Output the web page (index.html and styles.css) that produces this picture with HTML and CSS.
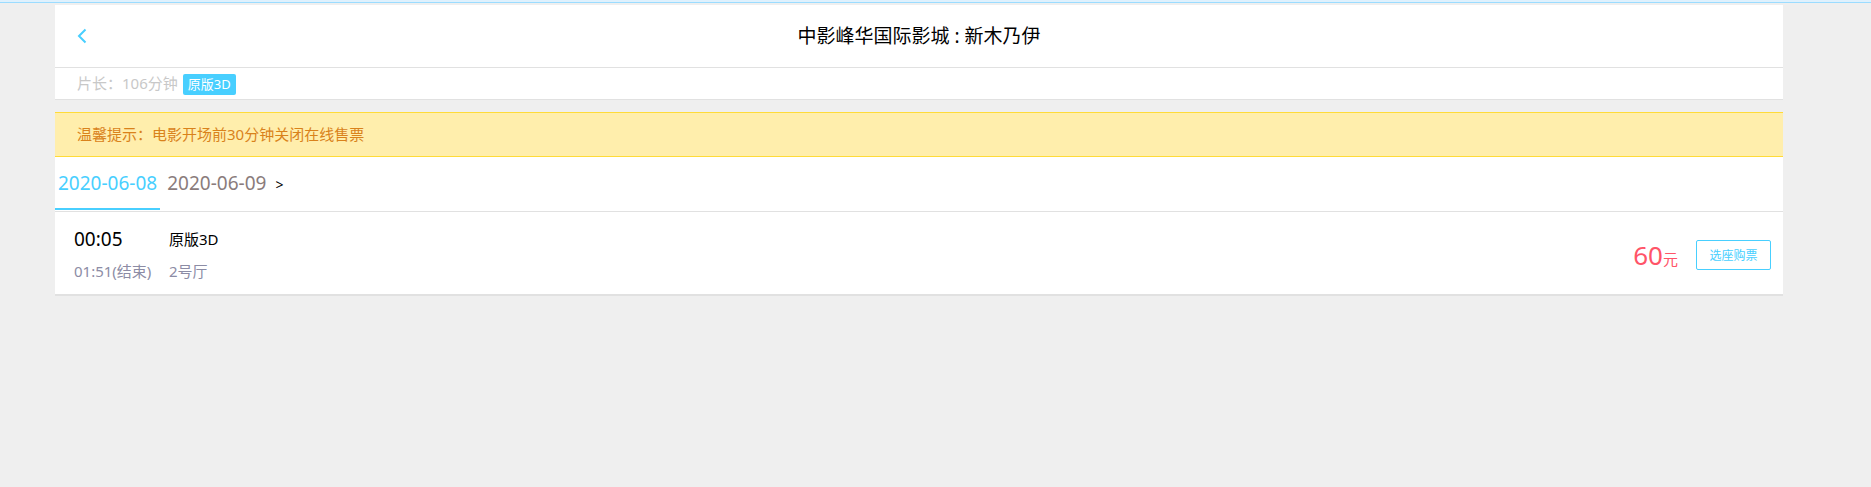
FILE: index.html
```html
<!DOCTYPE html>
<html lang="zh-CN">
<head>
<meta charset="utf-8">
<meta name="viewport" content="width=device-width, initial-scale=1">
<title>中影峰华国际影城 : 新木乃伊</title>
<link rel="stylesheet" href="styles.css">
</head>
<body>
<div class="topline"></div>
<main class="page">
  <header class="header">
    <a class="back" href="#" aria-label="返回">
      <svg width="10" height="16" viewBox="0 0 10 16" fill="none" stroke="currentColor" stroke-width="2"><path d="M8.500 1.500 2 8l6.500 6.500"/></svg>
    </a>
    <h1 class="title">中影峰华国际影城 : 新木乃伊</h1>
  </header>
  <section class="info">
    <span>片长：106分钟</span>
    <span class="badge">原版3D</span>
  </section>
  <p class="notice">温馨提示：电影开场前30分钟关闭在线售票</p>
  <nav class="dates">
    <a class="date date-active" href="#">2020-06-08</a>
    <a class="date" href="#">2020-06-09</a>
    <a class="more" href="#">&gt;</a>
  </nav>
  <article class="show">
    <div class="times">
      <div class="start">00:05</div>
      <div class="sub">01:51(结束)</div>
    </div>
    <div class="hall">
      <div class="version">原版3D</div>
      <div class="sub">2号厅</div>
    </div>
    <div class="price"><span class="amount">60</span>元</div>
    <button class="buy" type="button">选座购票</button>
  </article>
</main>
</body>
</html>
```
FILE: styles.css
```css
* {
  box-sizing: border-box;
}

body {
  margin: 0;
  background: #efefef;
  color: #000;
  font-family: "Noto Sans", "Noto Sans CJK SC", sans-serif;
  font-size: 15px;
  line-height: 24px;
}

a {
  color: inherit;
  text-decoration: none;
}

.topline {
  height: 3px;
  background: #dff1fd;
  border-bottom: 1px solid #9bdcff;
}

.page {
  margin: 2px 88px 0 55px;
}

.header {
  display: grid;
  grid-template-columns: 40px 1fr 40px;
  align-items: center;
  height: 63px;
  background: #fff;
  border-bottom: 1px solid #e1e1e1;
}

.back {
  display: flex;
  padding-left: 22px;
  color: #48cfff;
}

.title {
  margin: 0;
  font-size: 19px;
  font-weight: 400;
  text-align: center;
}

.info {
  display: flex;
  align-items: flex-start;
  gap: 5px;
  height: 32px;
  padding: 6px 22px 0;
  background: #fff;
  border-bottom: 1px solid #e1e1e1;
  color: #c8c8c8;
  line-height: 18px;
}

.badge {
  padding: 0 5px;
  border-radius: 2px;
  background: #48cfff;
  color: #fff;
  font-size: 13px;
  line-height: 21px;
}

.notice {
  margin: 12px 0 0;
  padding: 9px 22px 10px;
  background: #ffeeac;
  border: solid #ffdb38;
  border-width: 1px 0;
  color: #d9821b;
}

.dates {
  display: flex;
  align-items: flex-start;
  gap: 4px;
  height: 55px;
  background: #fff;
  border-bottom: 1px solid #e1e1e1;
}

.date {
  height: 53px;
  padding: 0 3px;
  border-bottom: 2px solid transparent;
  color: #8a7c7c;
  font-size: 19px;
  line-height: 53px;
}

.date-active {
  color: #48cfff;
  border-color: #48cfff;
}

.more {
  padding-left: 2px;
  font-size: 14px;
  line-height: 56px;
}

.show {
  display: flex;
  align-items: center;
  padding: 11px 12px 7px 19px;
  background: #fff;
  border-bottom: 2px solid #e1e1e1;
}

.times {
  width: 95px;
}

.start,
.version,
.sub {
  line-height: 32px;
}

.start {
  font-size: 19px;
}

.sub {
  color: #8c8ca5;
}

.price {
  margin-left: auto;
  padding-top: 4px;
  color: #ff5468;
  line-height: 32px;
}

.amount {
  font-size: 26px;
}

.buy {
  width: 75px;
  height: 30px;
  margin-left: 18px;
  padding: 0;
  border: 1px solid #48cfff;
  border-radius: 2px;
  background: #fff;
  color: #48cfff;
  font-family: inherit;
  font-size: 12px;
}
```
